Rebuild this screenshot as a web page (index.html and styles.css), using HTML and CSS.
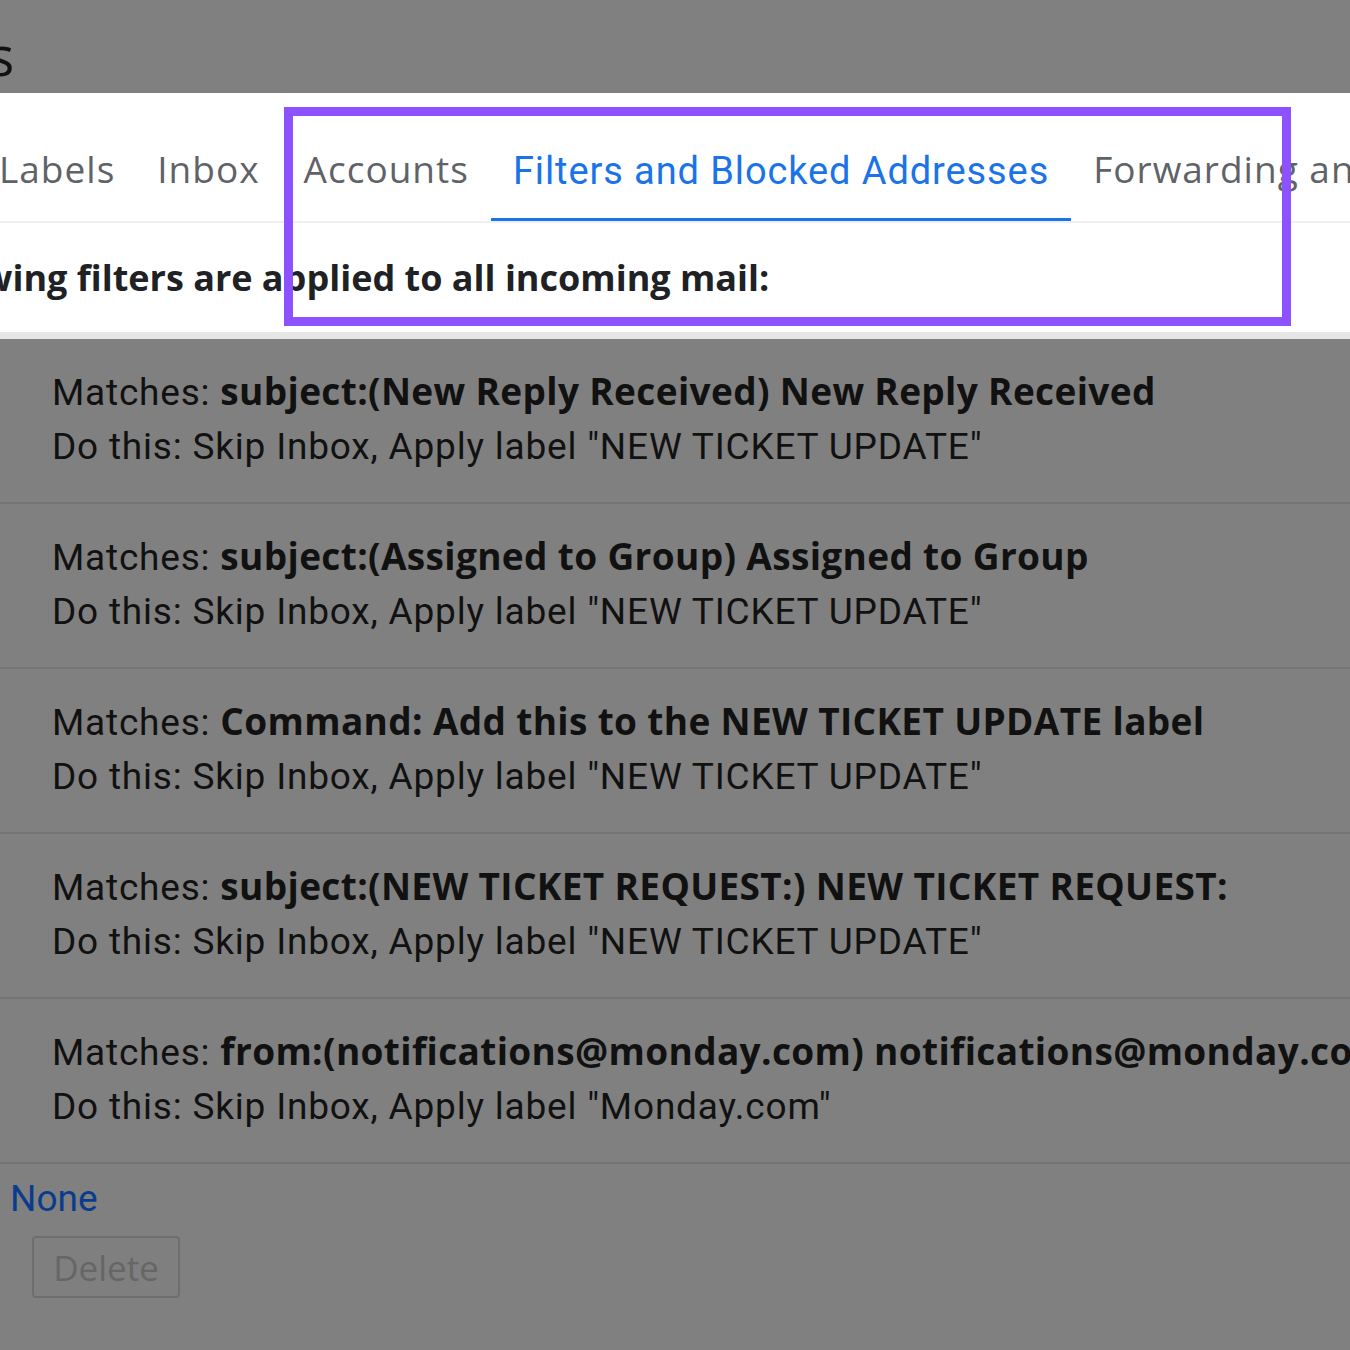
FILE: index.html
```
<!DOCTYPE html>
<html lang="en">
<head>
    <meta charset="UTF-8">
    <title>Settings - Filters and Blocked Addresses</title>
    <link rel="stylesheet" href="styles.css">
</head>
<body>
    <div class="top-bar">
        <h1 class="page-title">Settings</h1>
    </div>

    <div class="tabs-panel">
        <nav class="tabs">
            <span class="tab">Labels</span>
            <span class="tab">Inbox</span>
            <span class="tab">Accounts</span>
            <span class="tab active">Filters and Blocked Addresses</span>
            <span class="tab">Forwarding and POP/IMAP</span>
        </nav>
        <div class="intro">The following filters are applied to all incoming mail:</div>

        <!-- highlight box -->
        <div class="highlight"></div>
    </div>

    <div class="filters">
        <div class="filter-row">
            <div class="match">Matches: <b>subject:(New Reply Received) New Reply Received</b></div>
            <div class="action">Do this: Skip Inbox, Apply label "NEW TICKET UPDATE"</div>
        </div>
        <div class="filter-row">
            <div class="match">Matches: <b>subject:(Assigned to Group) Assigned to Group</b></div>
            <div class="action">Do this: Skip Inbox, Apply label "NEW TICKET UPDATE"</div>
        </div>
        <div class="filter-row">
            <div class="match">Matches: <b>Command: Add this to the NEW TICKET UPDATE label</b></div>
            <div class="action">Do this: Skip Inbox, Apply label "NEW TICKET UPDATE"</div>
        </div>
        <div class="filter-row">
            <div class="match">Matches: <b>subject:(NEW TICKET REQUEST:) NEW TICKET REQUEST:</b></div>
            <div class="action">Do this: Skip Inbox, Apply label "NEW TICKET UPDATE"</div>
        </div>
        <div class="filter-row">
            <div class="match">Matches: <b>from:(notifications@monday.com) notifications@monday.com</b></div>
            <div class="action">Do this: Skip Inbox, Apply label "Monday.com"</div>
        </div>
    </div>

    <div class="footer">
        <a class="select-none">None</a>
        <button class="delete-btn">Delete</button>
    </div>
</body>
</html>
```

FILE: styles.css
```
html, body {
    margin: 0;
    padding: 0;
}

body {
    width: 1350px;
    height: 1350px;
    overflow: hidden;
    background: #808080;
    font-family: Roboto, "Liberation Sans", sans-serif;
    color: #111;
}

.top-bar {
    height: 93px;
    overflow: hidden;
    background: #808080;
}

.page-title {
    margin: 0 0 0 -186px;
    font-family: "Open Sans", Roboto, sans-serif;
    font-weight: 500;
    font-size: 54px;
    line-height: 110px;
    color: #111;
    white-space: nowrap;
}

.tabs-panel {
    position: relative;
    background: #fff;
    border-bottom: 7px solid #e6e6e6;
}

.tabs {
    display: flex;
    height: 128px;
    align-items: center;
    margin-left: -23px;
    border-bottom: 2px solid #f0f0f0;
    white-space: nowrap;
    overflow: hidden;
}

.tab {
    font-family: "Open Sans", Roboto, sans-serif;
    font-size: 37px;
    letter-spacing: 1px;
    color: #5f6368;
    padding: 0 22px;
    height: 128px;
    line-height: 152px;
    box-sizing: border-box;
}

.tab:first-child {
    padding-right: 20px;
}

.tab.active {
    font-family: Roboto, sans-serif;
    font-size: 38px;
    letter-spacing: 0.9px;
    color: #1a73e8;
    border-bottom: 5px solid #1a73e8;
    margin-bottom: -4px;
}

.intro {
    height: 109px;
    line-height: 109px;
    margin-left: -174px;
    font-family: "Open Sans", Roboto, sans-serif;
    font-weight: 700;
    font-size: 36px;
    color: #202124;
    white-space: nowrap;
}

.highlight {
    position: absolute;
    left: 284px;
    top: 14px;
    width: 989px;
    height: 201px;
    border: 9px solid #8c52ff;
}

.filter-row {
    padding: 27px 0 28px 52px;
    border-bottom: 2px solid #747474;
    white-space: nowrap;
    font-size: 37px;
    letter-spacing: 0.8px;
    line-height: 54px;
}

.filter-row b {
    font-family: "Open Sans", Roboto, sans-serif;
    font-weight: 700;
    font-size: 37px;
    letter-spacing: 0.35px;
    line-height: 40px;
}

.footer {
    padding: 8px 0 0 10px;
}

.select-none {
    display: block;
    font-size: 37px;
    line-height: 54px;
    color: #0b3c8c;
}

.delete-btn {
    margin: 10px 0 0 22px;
    width: 148px;
    height: 62px;
    background: #7f7f7f;
    border: 2px solid #6e6e6e;
    border-radius: 4px;
    font-family: "Open Sans", Roboto, sans-serif;
    font-size: 35px;
    color: #666;
}
```
